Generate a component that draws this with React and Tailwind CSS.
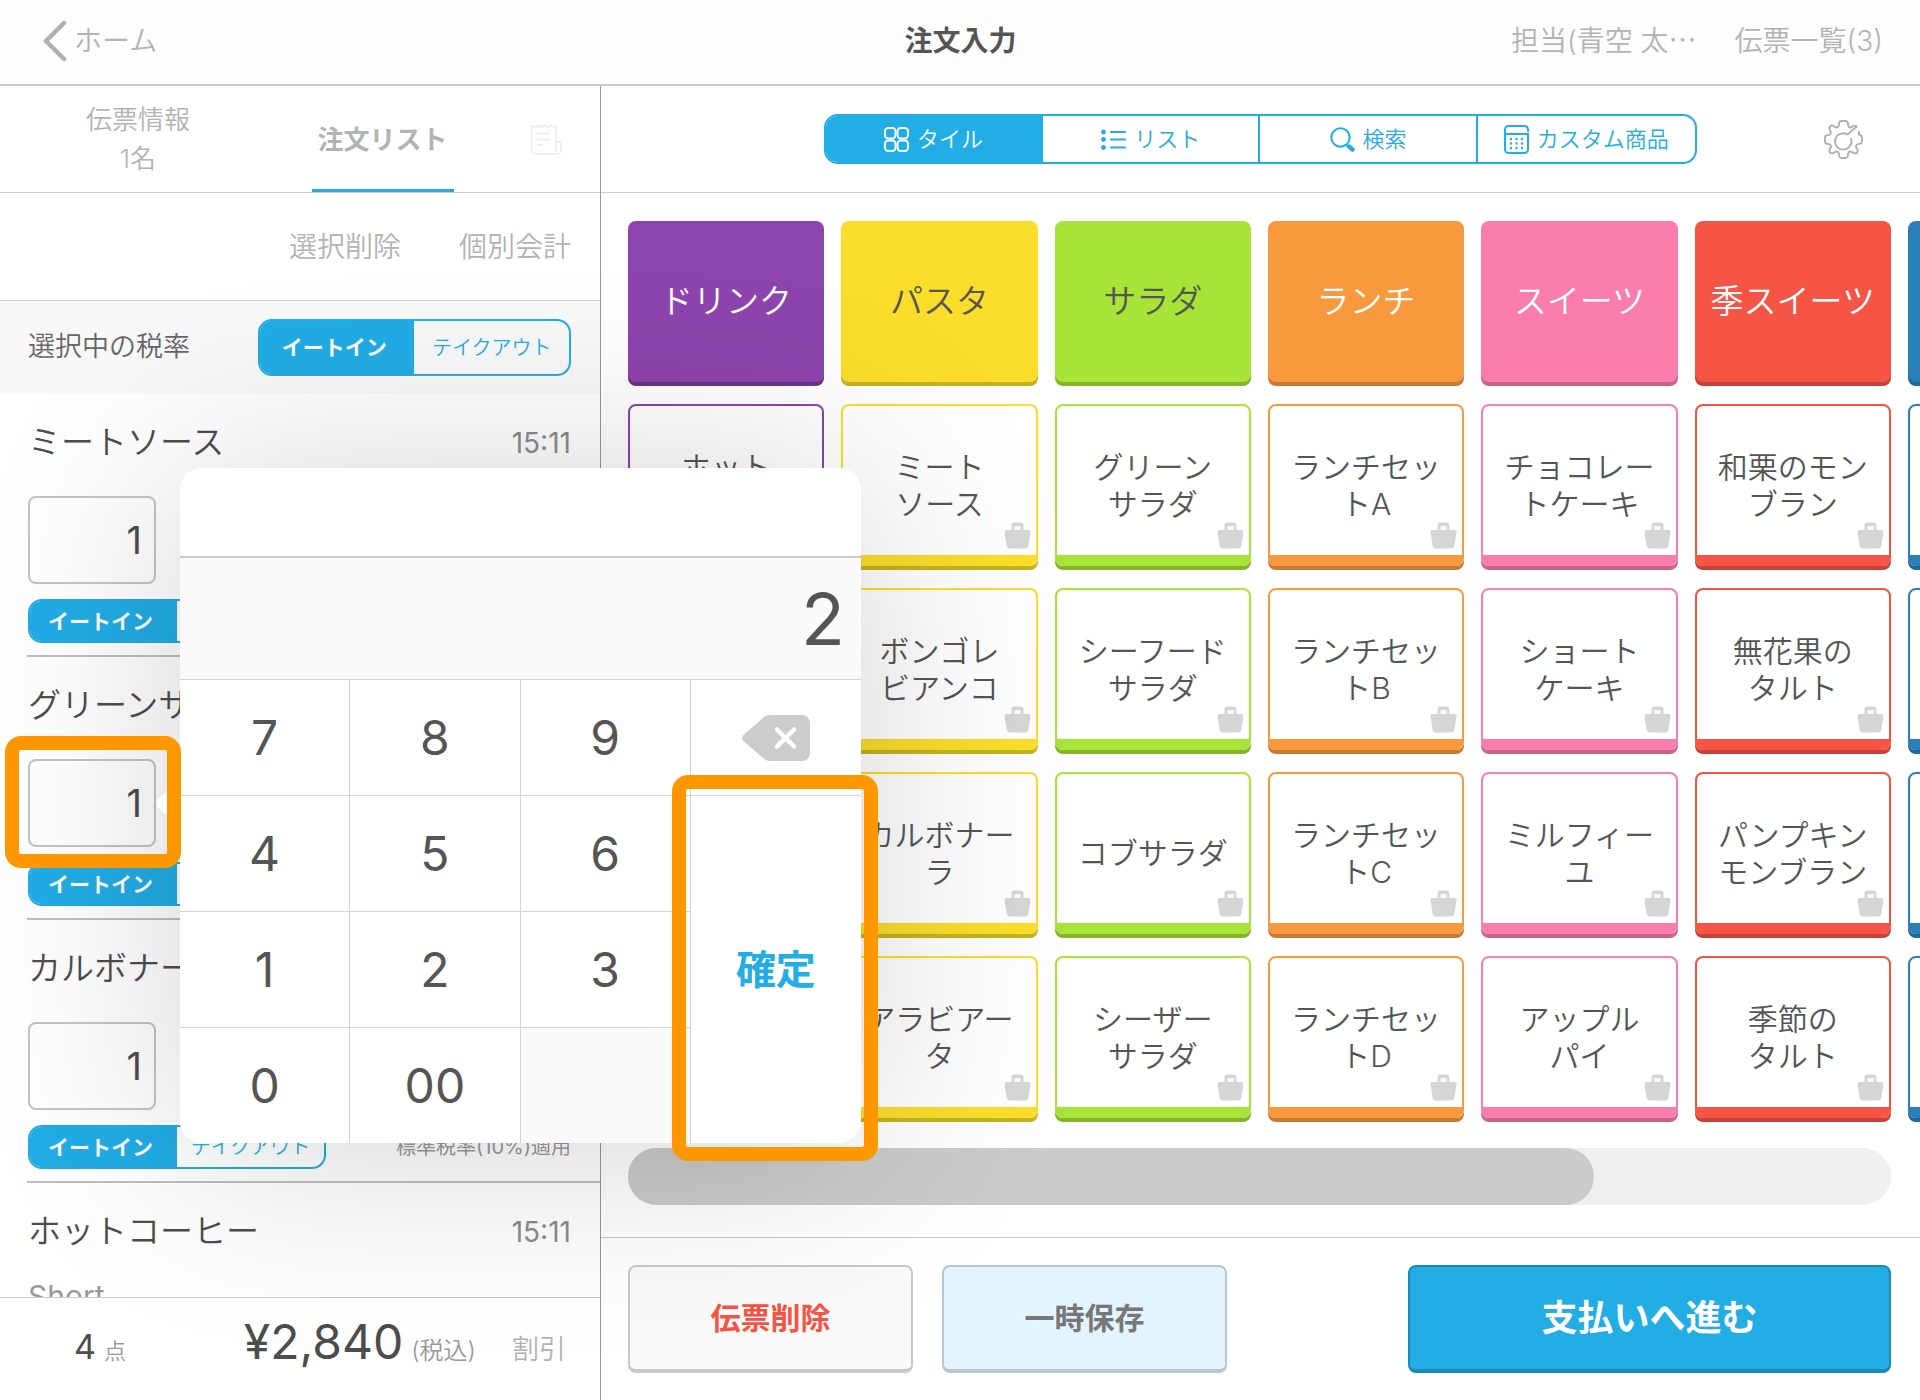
import { useState } from 'react';

const categories = [
  {
    name: 'ドリンク',
    head: 'bg-[#8e44ad] border-[#8e44ad] text-white',
    tile: 'border-[#8e44ad]',
    edge: 'shadow-[0_4px_0_#6e3388]',
    items: ['ホット\nコーヒー', 'アイス\nコーヒー', '紅茶', 'ジュース'],
  },
  {
    name: 'パスタ',
    head: 'bg-[#fbdd2a] border-[#fbdd2a] text-[#555]',
    tile: 'border-[#fbdd2a]',
    edge: 'shadow-[0_4px_0_#c8b021]',
    items: ['ミート\nソース', 'ボンゴレ\nビアンコ', 'カルボナー\nラ', 'アラビアー\nタ'],
  },
  {
    name: 'サラダ',
    head: 'bg-[#a8e337] border-[#a8e337] text-[#555]',
    tile: 'border-[#a8e337]',
    edge: 'shadow-[0_4px_0_#86b52c]',
    items: ['グリーン\nサラダ', 'シーフード\nサラダ', 'コブサラダ', 'シーザー\nサラダ'],
  },
  {
    name: 'ランチ',
    head: 'bg-[#f9993e] border-[#f9993e] text-white',
    tile: 'border-[#f9993e]',
    edge: 'shadow-[0_4px_0_#c77a32]',
    items: ['ランチセッ\nトA', 'ランチセッ\nトB', 'ランチセッ\nトC', 'ランチセッ\nトD'],
  },
  {
    name: 'スイーツ',
    head: 'bg-[#fa7dac] border-[#fa7dac] text-white',
    tile: 'border-[#fa7dac]',
    edge: 'shadow-[0_4px_0_#c8648a]',
    items: ['チョコレー\nトケーキ', 'ショート\nケーキ', 'ミルフィー\nユ', 'アップル\nパイ'],
  },
  {
    name: '季スイーツ',
    head: 'bg-[#f65444] border-[#f65444] text-white',
    tile: 'border-[#f65444]',
    edge: 'shadow-[0_4px_0_#c54336]',
    items: ['和栗のモン\nブラン', '無花果の\nタルト', 'パンプキン\nモンブラン', '季節の\nタルト'],
  },
  {
    name: '',
    head: 'bg-[#2980b9] border-[#2980b9] text-white',
    tile: 'border-[#2980b9]',
    edge: 'shadow-[0_4px_0_#216694]',
    items: ['', '', '', ''],
  },
];

const orders = [
  { name: 'ミートソース', time: '15:11', qty: 1 },
  { name: 'グリーンサラダ', time: '15:11', qty: 1 },
  { name: 'カルボナーラ', time: '15:11', qty: 1 },
  { name: 'ホットコーヒー', time: '15:11', qty: 1, option: 'Short' },
];

const BagIcon = () => (
  <svg viewBox="0 0 27 27" className="absolute right-[5px] bottom-[6px] size-[27px]" fill="#d6d6d6">
    <path d="M7.500 8V3.500a3 3 0 0 1 3-3h6a3 3 0 0 1 3 3V8h5a2.200 2.200 0 0 1 2.100 2.600L24.300 24a3 3 0 0 1-2.900 2.500H5.600A3 3 0 0 1 2.700 24L.4 10.600A2.200 2.200 0 0 1 2.500 8zM10.500 8h6V4.200h-6z" fillRule="evenodd" />
  </svg>
);

const TileIcon = () => (
  <svg viewBox="0 0 25 25" className="size-[25px]" fill="none" stroke="currentColor" strokeWidth="1.900">
    <rect x="1" y="1" width="10.500" height="10.500" rx="3.200" />
    <rect x="13.500" y="1" width="10.500" height="10.500" rx="3.200" />
    <rect x="1" y="13.500" width="10.500" height="10.500" rx="3.200" />
    <rect x="13.500" y="13.500" width="10.500" height="10.500" rx="3.200" />
  </svg>
);

const ListIcon = () => (
  <svg viewBox="0 0 25 25" className="size-[25px]" fill="none" stroke="currentColor" strokeWidth="2.200" strokeLinecap="round">
    <path d="M10 5h14M10 12.500h14M10 20.500h14" />
    <g fill="currentColor" stroke="none">
      <circle cx="2.500" cy="5" r="2.400" />
      <circle cx="2.500" cy="12.500" r="2.400" />
      <circle cx="2.500" cy="20.500" r="2.400" />
    </g>
  </svg>
);

const SearchIcon = () => (
  <svg viewBox="0 0 25 25" className="size-[25px]" fill="none" stroke="currentColor" strokeLinecap="round">
    <circle cx="10.500" cy="10.500" r="9.200" strokeWidth="2" />
    <path d="M16.500 18l2 1.500" strokeWidth="2" />
    <path d="M19 19.500l3.500 3" strokeWidth="4.400" />
  </svg>
);

const CalcIcon = () => (
  <svg viewBox="0 0 25 29" className="w-[25px] h-[29px]" fill="none" stroke="currentColor" strokeWidth="2" strokeLinecap="round">
    <path d="M24 6V4.500A3.500 3.500 0 0 0 20.500 1h-16A3.500 3.500 0 0 0 1 4.500v20A3.500 3.500 0 0 0 4.500 28h16a3.500 3.500 0 0 0 3.500-3.500V9H1" />
    <path d="M7 14h.01M12.500 14h.01M18 14h.01M7 18.500h.01M12.500 18.500h.01M18 18.500h.01M7 23h.01M12.500 23h.01M18 23h.01" strokeWidth="2.400" />
  </svg>
);

const GearIcon = () => (
  <svg viewBox="0 0 39 39" className="size-[39px]" fill="none" stroke="#b0b0b0" strokeWidth="1.900" strokeLinecap="round" strokeLinejoin="round">
    <path d="M32.500 6.500C31 5 29 5.500 28 7c-1 .8-2.500.5-3.500-.5-.6-1-.3-2.500-.8-4C23.300 1.300 22.500 1 21.500 1h-4c-1 0-1.800.3-2.200 1.500-.5 1.500-.2 3-.8 4-1 1-2.500 1.300-3.500.5C9.500 5.500 7.500 5 6 6.500 4.800 7.800 5.300 9.500 6.500 11c.7 1 .5 2.200 0 3-.8 1.200-2 1-3.700 1.300C1.500 15.600 1 16.500 1 17.500v4c0 1 .5 1.900 1.800 2.200 1.700.3 2.900.1 3.700 1.300.5.8.7 2 0 3-1.200 1.500-1.700 3.200-.5 4.500 1.500 1.500 3.500 1 5-.5 1-.8 2.500-.5 3.500.5.6 1 .3 2.500.8 4 .4 1.200 1.200 1.500 2.200 1.500h4c1 0 1.800-.3 2.200-1.500.5-1.500.2-3 .8-4 1-1 2.500-1.300 3.500-.5 1.500 1.500 3.500 2 5 .5 1.200-1.300.7-3-.5-4.500-.7-1-.5-2.200 0-3 .8-1.200 2-1 3.700-1.300 1.300-.3 1.800-1.200 1.800-2.200v-4c0-1-.5-1.900-1.800-2.200-1-.2-1.700-.8-1.200-3.300" />
    <path d="M32.500 6.500L23.500 14.500a8.200 8.200 0 1 0 3.500 4.500" />
  </svg>
);

const ReceiptIcon = () => (
  <svg viewBox="0 0 32 31" className="w-[32px] h-[31px]" fill="none" stroke="#efefef" strokeWidth="2" strokeLinejoin="round">
    <path d="M26 28V1.500l-2 1.500-3-1.500L18 3l-3-1.500L12 3 9 1.500 6 3 1.500 1.500V25a5 5 0 0 0 5 5h20.500a4 4 0 0 0 4-4v-8h-5" />
    <path d="M7 9.500h12.500M7 15.500h12.500M7 21h6" />
  </svg>
);

const BackspaceIcon = () => (
  <svg viewBox="0 0 68 46" className="w-[68px] h-[46px]">
    <path d="M28 0h32a8 8 0 0 1 8 8v30a8 8 0 0 1-8 8H28a10 10 0 0 1-6.500-2.500L1.500 26a4 4 0 0 1 0-6l20-17.500A10 10 0 0 1 28 0z" fill="#ccc" />
    <path d="M35 14.500l17 17M52 14.500l-17 17" stroke="#fff" strokeWidth="4.500" strokeLinecap="round" />
  </svg>
);

const modes = [
  { label: 'タイル', Icon: TileIcon },
  { label: 'リスト', Icon: ListIcon },
  { label: '検索', Icon: SearchIcon },
  { label: 'カスタム商品', Icon: CalcIcon },
];

function TaxToggle({ size }) {
  return (
    <div className={`${size} grid grid-cols-2 overflow-hidden rounded-[14px] border-2 border-[#22ade5] text-[#22ade5]`}>
      <button type="button" className="bg-[#22ade5] pr-1.5 text-white text-[21px] font-bold leading-none">イートイン</button>
      <button type="button" className="text-[20px] leading-none">テイクアウト</button>
    </div>
  );
}

function OrderItem({ order }) {
  return (
    <li className="ml-[27px] h-[263px] shrink-0 border-b-2 border-[#bfbfbf] pl-px pr-[29px]">
      <div className="flex h-[98px] items-center justify-between">
        <span className="text-[33px] text-[#4d4d4d]">{order.name}</span>
        <span className="text-[28px] font-normal text-[#8c8c8c]">{order.time}</span>
      </div>
      {order.option ? (
        <p className="text-[30px] font-normal leading-[30px] text-[#999]">{order.option}</p>
      ) : (
        <>
          <input
            type="text"
            aria-label={`${order.name}の数量`}
            defaultValue={order.qty}
            className="mt-1 block h-[88px] w-[128px] rounded-lg border-2 border-[#c4c4c4] bg-white/50 pr-3 text-right text-[38px] font-normal text-[#4d4d4d]"
          />
          <div className="mt-[15px] flex items-center justify-between">
            <TaxToggle size="w-[298px] h-[44px]" />
            <span className="text-[20px] font-normal text-[#999]">標準税率(10%)適用</span>
          </div>
        </>
      )}
    </li>
  );
}

function OrderPanel() {
  return (
    <section className="flex w-[31.3%] shrink-0 flex-col border-r border-[#999]">
      <div className="grid h-[107px] shrink-0 grid-cols-[5fr_4fr_2fr] border-b border-[#ccc] pl-0.5 text-[26px] text-[#b3b3b3]">
        <button type="button" className="leading-[39px]">伝票情報<br />1名</button>
        <div className="flex justify-center">
          <button type="button" className="w-[142px] border-b-[3px] border-t-[3px] border-t-transparent border-[#22ade5] font-bold">注文リスト</button>
        </div>
        <button type="button" aria-label="レシート" className="flex items-center justify-center"><ReceiptIcon /></button>
      </div>
      <div className="flex h-[108px] shrink-0 items-center justify-end gap-[58px] border-b border-[#d4d4d4] pr-[29px] text-[28px] text-[#b3b3b3]">
        <button type="button">選択削除</button>
        <button type="button">個別会計</button>
      </div>
      <div className="flex h-[93px] shrink-0 items-center justify-between bg-[#f8f8f8] pl-[28px] pr-[29px]">
        <span className="text-[27px] text-[#666]">選択中の税率</span>
        <TaxToggle size="w-[313px] h-[57px]" />
      </div>
      <ul className="flex min-h-0 flex-1 flex-col overflow-hidden">
        {orders.map((o) => <OrderItem key={o.name} order={o} />)}
      </ul>
      <div className="flex h-[103px] shrink-0 items-baseline border-t border-[#ccc] pl-[74px] pr-[34px] pt-2 text-[#999]">
        <span className="text-[34px] font-normal text-[#4d4d4d]">4</span>
        <span className="ml-2 text-[22px]">点</span>
        <span className="ml-auto text-[48px] font-normal text-[#4d4d4d]">¥2,840</span>
        <span className="ml-2 text-[24px]">(税込)</span>
        <button type="button" className="ml-9 text-[27px] text-[#b3b3b3]">割引</button>
      </div>
    </section>
  );
}

function MenuPanel() {
  return (
    <section className="flex min-w-0 flex-1 flex-col overflow-hidden">
      <div className="grid h-[107px] shrink-0 grid-cols-[223px_1fr_223px] items-center border-b border-[#ccc]">
        <div className="col-start-2 grid h-[50px] grid-cols-4 divide-x-2 divide-[#22ade5] overflow-hidden rounded-[14px] border-2 border-[#22ade5]">
          {modes.map(({ label, Icon }, i) => (
            <button
              key={label}
              type="button"
              className={`flex items-center justify-center gap-2 text-[22px] leading-none ${i === 0 ? 'bg-[#22ade5] text-white' : 'text-[#22ade5]'}`}
            >
              <Icon />
              {label}
            </button>
          ))}
        </div>
        <button type="button" aria-label="設定" className="mr-[57px] justify-self-end"><GearIcon /></button>
      </div>

      <div className="flex-1 pl-[27px] pr-[29px] pt-7">
        <div className="grid auto-cols-[calc((100%-85px)/6)] grid-flow-col gap-x-[17px]">
          {categories.map((c, i) => (
            <div key={i} className="flex flex-col gap-[22px]">
              <button type="button" aria-label={c.name || 'その他'} className={`h-[161px] whitespace-nowrap rounded-lg text-[33px] ${c.head} ${c.edge}`}>{c.name}</button>
              {c.items.map((item, j) => (
                <button
                  key={j}
                  type="button"
                  className={`relative flex h-[162px] items-center justify-center whitespace-pre rounded-lg border-2 border-b-[11px] pt-2.5 text-[30px] leading-[37px] text-[#555] ${c.tile} ${c.edge}`}
                >
                  {item}
                  <BagIcon />
                </button>
              ))}
            </div>
          ))}
        </div>
        <div className="mt-[30px] h-[57px] rounded-full bg-[#efefef]">
          <div className="h-full w-[76.5%] rounded-full bg-[#cbcbcb]" />
        </div>
      </div>

      <div className="flex h-[163px] shrink-0 gap-[29px] border-t border-[#ccc] pl-[27px] pr-[29px] pt-[27px] text-[30px] font-bold">
        <button type="button" className="h-[108px] w-[285px] rounded-lg border-2 border-b-4 border-[#c8c8c8] bg-[#fafafa] text-[#f65444]">伝票削除</button>
        <button type="button" className="h-[108px] w-[285px] rounded-lg border-2 border-b-4 border-[#b7c6d0] bg-[#e3f4fe] text-[#777]">一時保存</button>
        <button type="button" className="ml-auto h-[108px] w-[483px] rounded-lg border-2 border-b-4 border-[#1b8ab7] bg-[#22ade5] text-[36px] text-white">支払いへ進む</button>
      </div>
    </section>
  );
}

function Keypad() {
  const [value, setValue] = useState('2');
  const keyClass = 'border-r border-t border-[#d4d4d4] bg-white';
  const digit = (d) => (
    <button key={d} type="button" className={keyClass} onClick={() => setValue(value + d)}>{d}</button>
  );

  return (
    <div className="absolute left-[180px] top-[468px] z-10 w-[681px] rounded-[22px] shadow-[0_8px_210px_rgba(0,0,0,0.18)]">
      <svg viewBox="0 0 24 60" className="absolute -left-6 top-[305px] h-[60px] w-6" fill="#fff">
        <path d="M24 0v60C20 48 14 44 4 36a7 7 0 0 1 0-12C14 16 20 12 24 0z" />
      </svg>
      <div className="overflow-hidden rounded-[22px] bg-white text-[#555]">
        <div className="h-[90px] border-b-2 border-[#ccc]" />
        <output className="flex h-[121px] items-center justify-end bg-[#fafafa] pr-4 text-[72px] font-normal">{value}</output>
        <div className="grid auto-rows-[116px] grid-cols-4 text-[48px] font-normal">
          {['7', '8', '9'].map(digit)}
          <button type="button" aria-label="1文字削除" className="flex items-center justify-center border-t border-[#d4d4d4]" onClick={() => setValue(value.slice(0, -1))}><BackspaceIcon /></button>
          {['4', '5', '6'].map(digit)}
          <button type="button" className="row-span-3 border-t border-[#d4d4d4] text-[40px] font-bold text-[#22ade5]">確定</button>
          {['1', '2', '3', '0', '00'].map(digit)}
          <div className="border-r border-t border-[#d4d4d4] bg-[#fafafa]" />
        </div>
      </div>
    </div>
  );
}

export default function App() {
  return (
    <div className="relative flex h-screen flex-col overflow-hidden bg-white font-['Inter','Noto_Sans_CJK_JP',sans-serif] font-[350] text-[#555]">
      <header className="grid h-[86px] shrink-0 grid-cols-3 items-center border-b-2 border-[#ccc] bg-[#fdfdfd] pb-0.5 pl-[38px] pr-[37px] text-[28px] text-[#b3b3b3]">
        <a href="#home" className="flex items-center gap-1.5">
          <svg viewBox="0 0 30 42" className="h-[42px] w-[30px]" fill="none" stroke="#b0b0b0" strokeWidth="4.500" strokeLinecap="round" strokeLinejoin="round">
            <path d="M26 3L8 21l18 18" />
          </svg>
          ホーム
        </a>
        <h1 className="text-center font-bold text-[#555]">注文入力</h1>
        <div className="flex justify-end gap-[38px] whitespace-nowrap">
          <button type="button">担当(青空 太⋯</button>
          <button type="button">伝票一覧(3)</button>
        </div>
      </header>
      <main className="flex min-h-0 flex-1">
        <OrderPanel />
        <MenuPanel />
      </main>
      <Keypad />
      {/* tutorial highlights */}
      <div className="pointer-events-none absolute left-[5px] top-[736px] z-20 h-[132px] w-[176px] rounded-2xl border-[14px] border-[#ff9800]" />
      <div className="pointer-events-none absolute left-[672px] top-[775px] z-20 h-[386px] w-[206px] rounded-2xl border-[14px] border-[#ff9800]" />
    </div>
  );
}
